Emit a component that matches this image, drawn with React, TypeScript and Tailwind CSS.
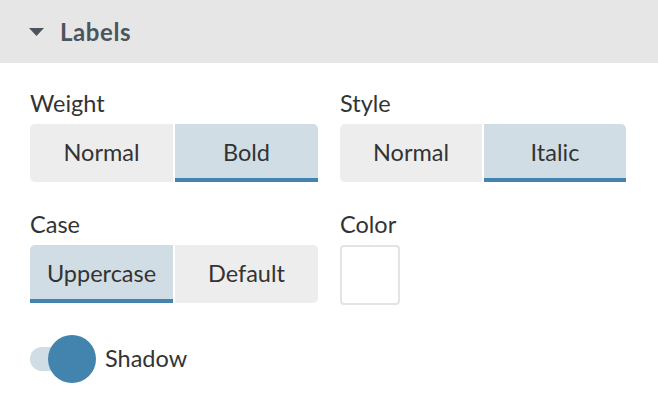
import { useState } from "react";

type SegProps = {
  options: string[];
  value: string;
  onChange: (v: string) => void;
};

const Segmented = ({ options, value, onChange }: SegProps) => {
  return (
    <div className="flex gap-[2px] w-full h-[58px]">
      {options.map((opt, i) => {
        const active = opt === value;
        const first = i === 0;
        const last = i === options.length - 1;
        return (
          <button
            key={opt}
            onClick={() => onChange(opt)}
            className={`flex-1 flex items-center justify-center text-[23.5px] text-[#333333] ${
              active
                ? "bg-[#d0dde5] border-b-4 border-[#4384af] pt-[4px]"
                : "bg-[#ededed]"
            } ${first ? (active ? "rounded-tl-[5px]" : "rounded-l-[5px]") : ""} ${
              last ? (active ? "rounded-tr-[5px]" : "rounded-r-[5px]") : ""
            }`}
          >
            {opt}
          </button>
        );
      })}
    </div>
  );
};

const Field = ({
  label,
  className,
  children,
}: {
  label: string;
  className: string;
  children: React.ReactNode;
}) => (
  <div className={`flex flex-col ${className}`}>
    <div className="h-[30px] leading-[30px] text-[23.5px] text-[#333333] mb-[6px]">{label}</div>
    {children}
  </div>
);

const App = () => {
  const [weight, setWeight] = useState("Bold");
  const [style, setStyle] = useState("Italic");
  const [textCase, setTextCase] = useState("Uppercase");
  const [shadow, setShadow] = useState(true);

  return (
    <div
      className="w-[658px] h-[418px] bg-white overflow-hidden"
      style={{ fontFamily: "Lato, 'Open Sans', sans-serif" }}
    >
      <div className="h-[63px] bg-[#e6e6e6] flex items-center pl-[29px]">
        <svg width="15" height="8" viewBox="0 0 15 8" className="mr-[16px]">
          <path d="M0 0 H15 L7.5 8 Z" fill="#4b545c" />
        </svg>
        <span className="text-[24px] font-bold tracking-[0.6px] text-[#4b555e]">Labels</span>
      </div>

      <div className="pl-[30px] pr-[32px] pt-[25px]">
        <div className="flex gap-[22px]">
          <Field label="Weight" className="w-[288px]">
            <Segmented options={["Normal", "Bold"]} value={weight} onChange={setWeight} />
          </Field>
          <Field label="Style" className="flex-1">
            <Segmented options={["Normal", "Italic"]} value={style} onChange={setStyle} />
          </Field>
        </div>

        <div className="flex gap-[22px] mt-[27px]">
          <Field label="Case" className="w-[288px]">
            <Segmented
              options={["Uppercase", "Default"]}
              value={textCase}
              onChange={setTextCase}
            />
          </Field>
          <Field label="Color" className="flex-1">
            <div className="w-[60px] h-[60px] rounded-[4px] border-2 border-[#e4e4e4] bg-white" />
          </Field>
        </div>

        <div className="flex items-center mt-[30px] h-[48px]">
          <button
            onClick={() => setShadow(!shadow)}
            className="relative w-[66px] h-[48px] flex items-center"
          >
            <span className="block w-[50px] h-[24px] rounded-full bg-[#d0dde5]" />
            <span
              className={`absolute top-0 w-[48px] h-[48px] rounded-full ${
                shadow ? "left-[18px] bg-[#4384af]" : "left-0 bg-[#bbbbbb]"
              }`}
            />
          </button>
          <span className="ml-[9px] text-[23.5px] text-[#333333]">Shadow</span>
        </div>
      </div>
    </div>
  );
};

export default App;
